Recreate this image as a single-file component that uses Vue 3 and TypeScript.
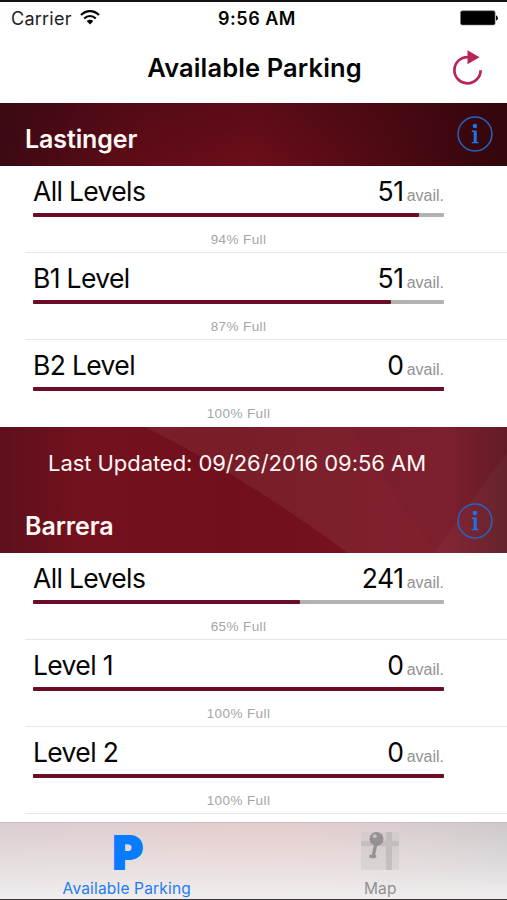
<script setup lang="ts">
interface Level {
  name: string
  available: number
  full: number
}

interface Garage {
  name: string
  updated?: string
  levels: Level[]
}

const garages: Garage[] = [
  {
    name: 'Lastinger',
    levels: [
      { name: 'All Levels', available: 51, full: 94 },
      { name: 'B1 Level', available: 51, full: 87 },
      { name: 'B2 Level', available: 0, full: 100 },
    ],
  },
  {
    name: 'Barrera',
    updated: 'Last Updated: 09/26/2016 09:56 AM',
    levels: [
      { name: 'All Levels', available: 241, full: 65 },
      { name: 'Level 1', available: 0, full: 100 },
      { name: 'Level 2', available: 0, full: 100 },
    ],
  },
]
</script>

<template>
  <div class="screen">
    <div class="status">
      <div class="carrier">
        <span>Carrier</span>
        <svg class="wifi" width="20" height="15" viewBox="0 0 20 15">
          <path d="M1 5.1C6-.2 14-.2 19 5.1" fill="none" stroke="#000" stroke-width="2.2" />
          <path d="M4.2 8.5c3.3-3.4 8.3-3.4 11.6 0" fill="none" stroke="#000" stroke-width="2.1" />
          <path d="M6.7 11.1c1.9-1.8 4.7-1.8 6.6 0L10 14.5z" fill="#000" />
        </svg>
      </div>
      <span class="time">9:56 AM</span>
      <div class="power">
        <svg width="39" height="16" viewBox="0 0 39 16">
          <rect x=".5" y=".8" width="34.6" height="14.2" rx="1.8" fill="#000" stroke="#777" stroke-width=".6" />
          <path d="M36 5.4c2.6.4 2.6 4.7 0 5.1z" fill="#111" />
        </svg>
      </div>
    </div>

    <header class="nav">
      <h1>Available Parking</h1>
      <svg class="refresh" width="32" height="36" viewBox="0 0 32 36">
        <path d="M28.6 20.2A13.1 13.1 0 1 1 16 7.1" fill="none" stroke="#b7235a" stroke-width="2.7" />
        <path d="M15.5.3 27.6 7.2 15.5 14.2z" fill="#b7235a" />
      </svg>
    </header>

    <main>
      <section v-for="garage in garages" :key="garage.name">
        <div class="banner" :class="{ tall: garage.updated }">
          <svg v-if="garage.updated" class="facets" viewBox="0 0 507 126" preserveAspectRatio="none">
            <path d="M145 0H507V126H348Q245 50 145 0z" fill="#fff" fill-opacity=".06" />
            <path d="M350 0H507V126H435Q390 60 350 0z" fill="#500010" fill-opacity=".06" />
            <path d="M507 25V126H434z" fill="#fff" fill-opacity=".03" />
          </svg>
          <p v-if="garage.updated" class="updated"><span>{{ garage.updated }}</span></p>
          <div class="title">
            <h2>{{ garage.name }}</h2>
            <svg class="info" width="36" height="36" viewBox="0 0 36 36">
              <circle cx="18" cy="18" r="16.9" fill="none" stroke="#2464c8" stroke-width="1.5" />
              <circle cx="17.9" cy="9.9" r="2.25" fill="#1677f5" />
              <path d="M14.8 14.6h4.9v11.3h1.7v1.3h-6.7v-1.3h2V16h-1.9z" fill="#1677f5" />
            </svg>
          </div>
        </div>

        <div v-for="level in garage.levels" :key="level.name" class="row">
          <div class="line">
            <span class="name">{{ level.name }}</span>
            <span class="count">{{ level.available }}</span>
            <span class="avail">avail.</span>
          </div>
          <div class="track"><div class="fill" :style="{ width: level.full + '%' }"></div></div>
          <span class="percent">{{ level.full }}% Full</span>
        </div>
      </section>
    </main>

    <nav class="tabs">
      <div class="tab active">
        <span class="p-icon">P</span>
        <span class="label">Available Parking</span>
      </div>
      <div class="tab">
        <svg class="map-icon" width="38" height="40" viewBox="0 0 38 40">
          <rect y="1" width="38" height="38" fill="#c9c3c4" fill-opacity=".4" />
          <path d="M0 10h38v5H0zM25 1h6v38h-6z" fill="#b6b2b3" fill-opacity=".6" />
          <path d="M15 12 12.4 24.5" fill="none" stroke="#969394" stroke-width="3.4" />
          <ellipse cx="11.7" cy="25.4" rx="3.7" ry="1.8" fill="#969394" />
          <circle cx="15.5" cy="7.9" r="7" fill="#949192" />
          <circle cx="13.8" cy="5.2" r="1.9" fill="#c9c5c6" />
        </svg>
        <span class="label">Map</span>
      </div>
    </nav>
  </div>
</template>

<style>
body {
  margin: 0;
}
</style>

<style scoped>
.screen {
  width: 507px;
  height: 900px;
  box-sizing: border-box;
  border-top: 2px solid #151214;
  border-bottom: 1px solid #3d3438;
  display: flex;
  flex-direction: column;
  overflow: hidden;
  background: #fff;
  color: #050505;
  font-family: Inter, "Liberation Sans", sans-serif;
}
h1, h2, p {
  margin: 0;
}
svg {
  display: block;
}
.status {
  height: 32px;
  flex: none;
  display: grid;
  grid-template-columns: 1fr auto 1fr;
  align-items: center;
  padding: 0 8px 0 11px;
  font-size: 18px;
}
.carrier {
  display: flex;
  align-items: center;
  gap: 8px;
  color: #222;
  letter-spacing: 0.25px;
}
.wifi {
  margin-bottom: 2px;
}
.time {
  font-weight: 600;
  font-size: 18px;
  letter-spacing: 0.5px;
  margin-left: 4px;
}
.power {
  display: flex;
  justify-content: flex-end;
}
.nav {
  height: 69px;
  flex: none;
  display: grid;
  grid-template-columns: 1fr auto 1fr;
  align-items: center;
  padding: 0 23px 0 25px;
}
h1 {
  grid-column: 2;
  font-size: 25.5px;
  line-height: 32px;
  font-weight: 600;
  letter-spacing: 0.12px;
  margin-bottom: 2px;
}
.refresh {
  justify-self: end;
  margin-bottom: 2px;
}
main {
  flex: none;
  height: 719px;
}
.banner {
  position: relative;
  height: 63px;
  color: #fff8f5;
  background:
    linear-gradient(90deg, #3b0913 0%, rgba(70, 8, 18, 0.4) 24%, transparent 50%, rgba(60, 7, 14, 0.7) 80%, #32060a 100%),
    linear-gradient(#5b0c17, #6d0e1b);
}
.banner.tall {
  height: 126px;
  background: linear-gradient(90deg, #5d101c 0%, #75111f 17%, #710f1c 45%, #7a1424 88%, #5a101a 100%);
}
.facets {
  position: absolute;
  inset: 0;
  width: 100%;
  height: 100%;
}
.updated {
  position: relative;
  height: 63px;
  padding: 8px 33px 0 0;
  box-sizing: border-box;
  display: flex;
  align-items: center;
  justify-content: center;
  font-size: 22px;
  letter-spacing: -0.06px;
}
.title {
  position: relative;
  height: 63px;
  box-sizing: border-box;
  display: flex;
  justify-content: space-between;
  align-items: center;
  padding: 0 14px 0 25px;
}
.info {
  margin-bottom: 1px;
}
h2 {
  padding-top: 9px;
  font-size: 25px;
  line-height: 30px;
  font-weight: 600;
  letter-spacing: -0.1px;
}
.row {
  height: 87px;
  box-sizing: border-box;
  padding: 8px 63px 0 33px;
  display: flex;
  flex-direction: column;
  background: linear-gradient(#e6e6e8, #e6e6e8) 25px 100% / 100% 1px no-repeat;
}
.row:last-child {
  background-position: 25px 100%;
}
section:first-child .row:last-child {
  background: none;
}
.line {
  display: flex;
  align-items: baseline;
  height: 39px;
  line-height: 34px;
}
.name {
  flex: 1;
  font-size: 26.5px;
  letter-spacing: -0.65px;
}
.count {
  font-size: 26.5px;
  letter-spacing: -0.4px;
}
.avail {
  font-family: "Liberation Sans", Arial, sans-serif;
  font-size: 16px;
  color: #929292;
  margin-left: 3px;
}
.track {
  height: 4px;
  border-radius: 1px;
  background: #b2b2b2;
}
.fill {
  height: 4px;
  border-radius: 1px;
  background: #6c0d26;
}
.percent {
  font-family: "Liberation Sans", Arial, sans-serif;
  font-size: 13.5px;
  letter-spacing: 0.4px;
  line-height: 16px;
  color: #a5a5a5;
  text-align: center;
  margin-top: 15px;
}
.tabs {
  height: 77px;
  flex: none;
  display: grid;
  grid-template-columns: 1fr 1fr;
  border-top: 1px solid #c9bfc1;
  box-sizing: border-box;
  background:
    linear-gradient(rgba(240, 238, 238, 0) 0%, rgba(240, 238, 238, 0.5) 55%, #f0eeee 100%),
    linear-gradient(90deg, #dacdcf 0%, #dfced0 20%, #e6cccd 45%, #e4cccd 60%, #d7cccd 82%, #cdc8c9 100%);
}
.tab {
  display: flex;
  flex-direction: column;
  align-items: center;
  justify-content: flex-end;
  color: #929092;
  font-size: 15.5px;
  line-height: 20px;
}
.label {
  letter-spacing: 0.17px;
}
.tab.active {
  color: #1b7df0;
}
.p-icon {
  font-weight: 900;
  font-size: 46px;
  line-height: 54px;
  color: #087cff;
  -webkit-text-stroke: 1.8px #087cff;
  padding-left: 2px;
}
.map-icon {
  margin-bottom: 8px;
}
</style>
